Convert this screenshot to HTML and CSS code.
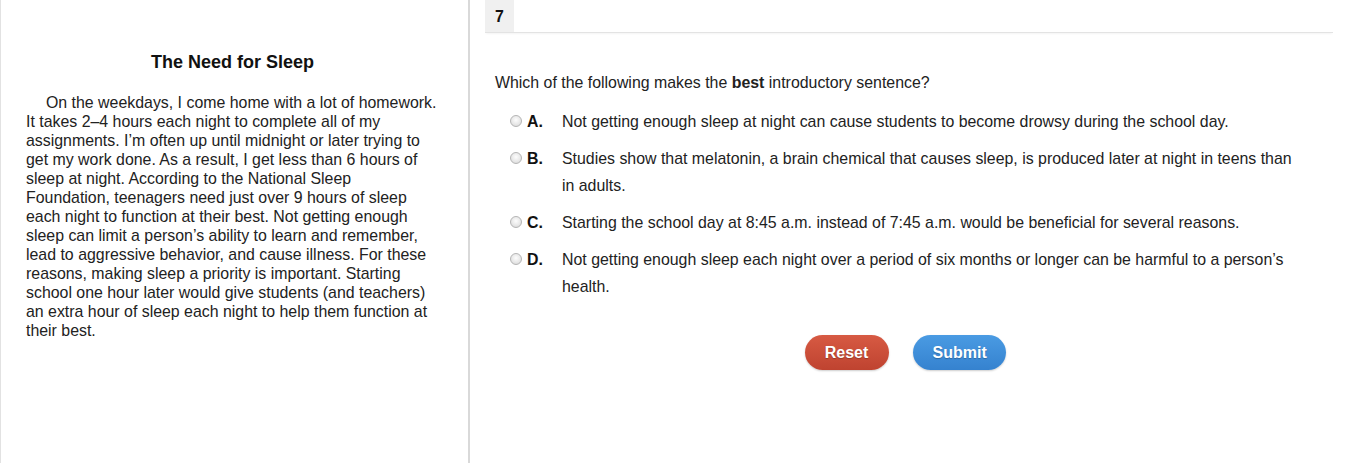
FILE: index.html
```html
<!DOCTYPE html>
<html>
<head>
<meta charset="utf-8">
<link rel="stylesheet" href="styles.css">
</head>
<body>
<div class="layout">
  <section class="passage">
    <h2 class="passage-title">The Need for Sleep</h2>
    <p class="passage-text">On the weekdays, I come home with a lot of homework. It takes 2–4 hours each night to complete all of my assignments. I’m often up until midnight or later trying to get my work done. As a result, I get less than 6 hours of sleep at night. According to the National Sleep Foundation, teenagers need just over 9 hours of sleep each night to function at their best. Not getting enough sleep can limit a person’s ability to learn and remember, lead to aggressive behavior, and cause illness. For these reasons, making sleep a priority is important. Starting school one hour later would give students (and teachers) an extra hour of sleep each night to help them function at their best.</p>
  </section>
  <section class="question">
    <div class="q-header"><span class="q-number">7</span></div>
    <p class="q-stem">Which of the following makes the <b>best</b> introductory sentence?</p>
    <ul class="options">
      <li class="option"><span class="radio"></span><span class="opt-letter">A.</span><span class="opt-text">Not getting enough sleep at night can cause students to become drowsy during the school day.</span></li>
      <li class="option"><span class="radio"></span><span class="opt-letter">B.</span><span class="opt-text">Studies show that melatonin, a brain chemical that causes sleep, is produced later at night in teens than in adults.</span></li>
      <li class="option"><span class="radio"></span><span class="opt-letter">C.</span><span class="opt-text">Starting the school day at 8:45 a.m. instead of 7:45 a.m. would be beneficial for several reasons.</span></li>
      <li class="option"><span class="radio"></span><span class="opt-letter">D.</span><span class="opt-text">Not getting enough sleep each night over a period of six months or longer can be harmful to a person’s health.</span></li>
    </ul>
    <div class="actions">
      <button class="btn btn-reset">Reset</button>
      <button class="btn btn-submit">Submit</button>
    </div>
  </section>
</div>
</body>
</html>
```
FILE: styles.css
```css
* { box-sizing: border-box; }
html, body { margin: 0; padding: 0; background: #fff; }
body {
  font-family: "Liberation Sans", Arial, sans-serif;
  font-size: 15.9px;
  color: #222;
  height: 463px;
  overflow: hidden;
}
.layout {
  display: flex;
  height: 463px;
}
.passage {
  width: 470px;
  flex: none;
  border-left: 1px solid #e2e2e2;
  border-right: 2px solid #d9d9d9;
  padding: 52px 29px 0 25px;
}
.passage-title {
  margin: 0 0 21px;
  font-size: 18px;
  font-weight: bold;
  line-height: 20px;
  text-align: center;
  color: #111;
}
.passage-text {
  margin: 0;
  line-height: 19px;
  text-indent: 20px;
}
.question {
  width: 848px;
  margin-left: 15px;
  flex: none;
}
.q-header {
  height: 33px;
  border-bottom: 1px solid #e3e3e3;
  box-shadow: 0 2px 2px -1px #f4f4f4;
}
.q-number {
  display: inline-block;
  width: 29px;
  height: 32px;
  line-height: 33px;
  background: #f0f0f0;
  font-weight: bold;
  text-align: center;
  color: #111;
}
.q-stem {
  margin: 36px 0 0 10px;
  line-height: 27px;
}
.options {
  list-style: none;
  margin: 12px 0 0;
  padding: 0 0 0 25px;
}
.option {
  display: flex;
  align-items: flex-start;
  line-height: 27px;
  margin-bottom: 10px;
}
.radio {
  flex: none;
  width: 12px;
  height: 12px;
  margin-top: 7px;
  border-radius: 50%;
  border: 1px solid #b5b5b5;
  background: radial-gradient(circle at 50% 40%, #fdfdfd 0%, #e6e6e6 60%, #d2d2d2 100%);
}
.opt-letter {
  flex: none;
  width: 35px;
  margin-left: 5px;
  font-weight: bold;
  color: #111;
}
.opt-text {
  width: 740px;
}
.actions {
  display: flex;
  justify-content: center;
  gap: 24px;
  margin-top: 35px;
  padding-right: 8px;
}
.btn {
  font-family: "Liberation Sans", Arial, sans-serif;
  font-size: 16px;
  font-weight: bold;
  color: #fff;
  border: none;
  border-radius: 18px;
  height: 35px;
  padding: 0 20px;
  text-shadow: 0 1px 1px rgba(0,0,0,0.25);
}
.btn-reset {
  width: 84px;
  background: linear-gradient(#d75a43, #bf4330);
  box-shadow: 0 1px 2px rgba(0,0,0,0.2);
}
.btn-submit {
  width: 93px;
  background: linear-gradient(#4a9be3, #3582cf);
  box-shadow: 0 1px 2px rgba(0,0,0,0.2);
}
```
